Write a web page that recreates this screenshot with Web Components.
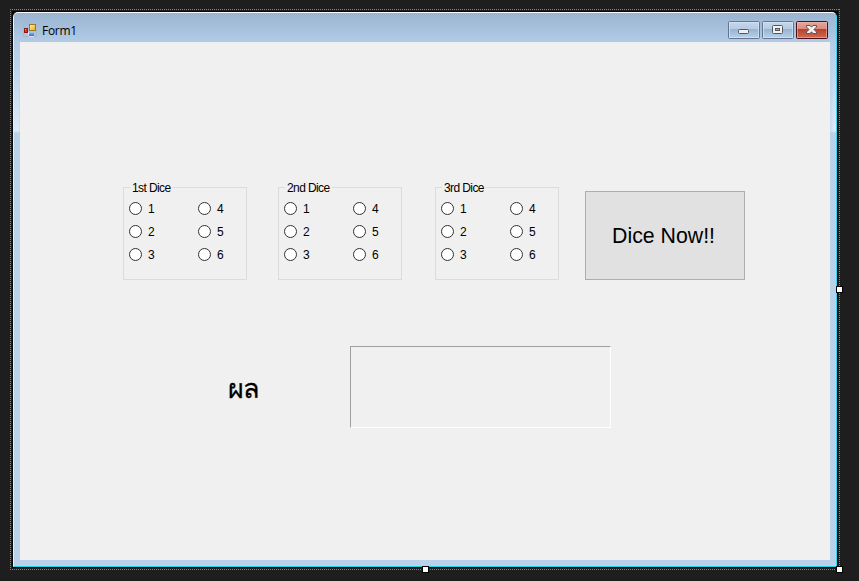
<!DOCTYPE html>
<html lang="th">
<head>
<meta charset="utf-8">
<title>Form1</title>
<style>
html,body{margin:0;height:100%;background:#1e1e1e;overflow:hidden}
body{font-family:"Liberation Sans",sans-serif;color:#000}
</style>
</head>
<body>
<design-surface>
  <form-window caption="Form1">
    <dice-row>
      <dice-group caption="1st Dice"></dice-group>
      <dice-group caption="2nd Dice" style="margin-left:31px"></dice-group>
      <dice-group caption="3rd Dice" style="margin-left:33px"></dice-group>
      <push-button>Dice Now!!</push-button>
    </dice-row>
    <result-row>ผล</result-row>
  </form-window>
</design-surface>
<script>
function define(name, html){
  customElements.define(name, class extends HTMLElement{
    constructor(){
      super();
      const root=this.attachShadow({mode:'open'});
      root.innerHTML=html;
      const cap=root.querySelector('.caption');
      if(cap) cap.textContent=this.getAttribute('caption')||'';
    }
  });
}

define('design-surface', `<style>
:host{display:block;position:relative;box-sizing:border-box;width:859px;height:581px;padding:12px 0 0 13px;background:#1e1e1e}
svg{position:absolute;left:0;top:0}
::slotted(*){position:relative}
</style>
<svg width="859" height="581" shape-rendering="crispEdges">
  <path d="M12 11H838V568H12Z" fill="#080808"/>
  <path d="M10 9.5H840M10 569.5H840M10.5 9V570M839.5 9V570" stroke="#858585" stroke-dasharray="1 1" fill="none"/>
</svg>
<slot></slot>
<svg width="859" height="581" shape-rendering="crispEdges" style="z-index:2">
  <g fill="#fff" stroke="#000"><rect x="836.5" y="286.5" width="6" height="6"/><rect x="836.5" y="566.5" width="6" height="6"/><rect x="422.5" y="566.5" width="6" height="6"/></g>
</svg>`);

define('title-bar', `<style>
:host{display:flex;height:29px;box-sizing:border-box;padding:0 3px 0 3px;align-items:flex-start}
.icon{margin:10px 5px 0 0;display:block}
.caption{flex:1;font:12px/16px "Open Sans","Noto Sans",sans-serif;margin-top:10px;letter-spacing:-.3px}
.buttons{display:flex;gap:2px;margin-top:8px}
.buttons svg{display:block}
</style>
<svg class="icon" width="14" height="14" viewBox="0 0 14 14" shape-rendering="crispEdges">
  <defs>
    <linearGradient id="y" x2="1" y2="1"><stop stop-color="#fff5a8"/><stop offset="1" stop-color="#e6a90c"/></linearGradient>
    <linearGradient id="b" x2="0" y2="1"><stop stop-color="#a5c8fa"/><stop offset="1" stop-color="#3266c8"/></linearGradient>
  </defs>
  <path d="M.5 .5H13.5V13.5H.5Z" fill="none" stroke="#a9b9cb"/>
  <rect x="6.5" y="1.5" width="6" height="6" fill="url(#y)" stroke="#9a7a26"/>
  <rect x="1.5" y="5.500" width="3" height="4" fill="#d8381c" stroke="#901a12"/><path d="M2 6h1v1H2z" fill="#ff9c82"/>
  <rect x="6" y="9" width="5" height="4" fill="url(#b)"/>
  <path d="M5 9V13M6 13.500H11" stroke="#d9e5f3"/>
</svg>
<span class="caption"></span>
<div class="buttons">
  <svg width="32" height="18" viewBox="0 0 32 18">
    <defs><linearGradient id="g" x2="0" y2="1"><stop stop-color="#c5d8ea"/><stop offset=".43" stop-color="#b5cce4"/><stop offset=".44" stop-color="#96b2cf"/><stop offset="1" stop-color="#b7d3ee"/></linearGradient></defs>
    <rect x=".5" y=".5" width="31" height="17" rx="1" fill="url(#g)" stroke="#66758d"/><rect x="1.5" y="1.5" width="29" height="15" fill="none" stroke="#d6e5f3" opacity=".7"/>
    <rect x="10.500" y="8.500" width="10" height="4" rx="1" fill="#eee" stroke="#525860"/>
  </svg>
  <svg width="32" height="18" viewBox="0 0 32 18">
    <rect x=".5" y=".5" width="31" height="17" rx="1" fill="url(#g)" stroke="#66758d"/><rect x="1.5" y="1.5" width="29" height="15" fill="none" stroke="#d6e5f3" opacity=".7"/>
    <rect x="10.500" y="4.500" width="10" height="8" rx="1" fill="#f1f1ef" stroke="#525860"/><rect x="13.500" y="7.500" width="4" height="2" fill="#96afcf" stroke="#525860"/>
  </svg>
  <svg width="32" height="18" viewBox="0 0 32 18">
    <defs><linearGradient id="r" x2="0" y2="1"><stop stop-color="#e8a89c"/><stop offset=".43" stop-color="#d98c7d"/><stop offset=".44" stop-color="#b83e28"/><stop offset="1" stop-color="#d06f53"/></linearGradient></defs>
    <rect x=".5" y=".5" width="31" height="17" rx="1" fill="url(#r)" stroke="#4c0f1c"/><rect x="1.5" y="1.5" width="29" height="15" fill="none" stroke="#edb9ae" opacity=".6"/>
    <path d="M10.500 4.500H14L15.500 6.200L17 4.500H20.500V6L18 8.500L20.500 11V12.500H17L15.500 10.800L14 12.500H10.500V11L13 8.500L10.500 6Z" fill="#f4f2f1" stroke="#5d525a"/>
  </svg>
</div>`);

define('form-window', `<style>
:host{display:flex;flex-direction:column;box-sizing:border-box;width:824px;height:555px;border:solid;border-width:1px;border-color:#fff #38d8f3 #20d3ea #eee;border-radius:5px 5px 0 0;padding:0 6px 6px;
 background:linear-gradient(90deg,transparent 5px,#b9d1ea66 5px 6px,transparent 6px 816px,#b9d1ea66 816px 818px,transparent 819px) 0 29px no-repeat,linear-gradient(#99b4d1 0,#b2cbe6 29px,#bed4ed 55px,#dce9f7 118px,#b9d1ea 120px)}
title-bar{margin:0 -1px 0 0;flex:none}
.client{flex:1;background:#f0f0f0;display:flex;flex-direction:column;width:810px}
</style>
<title-bar caption="Form1"></title-bar>
<div class="client"><slot></slot></div>`);

define('dice-row', `<style>:host{display:flex;align-items:flex-end;padding:138px 0 0 103px;height:100px}</style><slot></slot>`);

define('radio-option', `<style>
:host{display:flex;align-items:center;height:23px;font-size:12px}
svg{margin-right:6px;flex:none}
</style><svg width="13" height="13"><circle cx="6.500" cy="6.500" r="6" fill="#fff" stroke="#333"/></svg><slot></slot>`);

define('dice-group', `<style>
:host{display:block;width:124px;height:100px}
fieldset{box-sizing:border-box;height:100px;margin:0;border:1px solid #dcdcdc;padding:0 0 0 5px;min-width:0}
legend{margin-left:1px;padding:1px 2px 0;height:15px;box-sizing:border-box;font-size:12px;line-height:15px;letter-spacing:-.6px}
.options{display:grid;grid-template-columns:69px 1fr;margin-top:2px}
</style>
<fieldset><legend class="caption"></legend><div class="options">
<radio-option>1</radio-option><radio-option>4</radio-option>
<radio-option>2</radio-option><radio-option>5</radio-option>
<radio-option>3</radio-option><radio-option>6</radio-option>
</div></fieldset>`);

define('push-button', `<style>
:host{display:flex;margin-left:26px}
button{box-sizing:border-box;width:160px;height:89px;border:1px solid #adadad;background:#e1e1e1;color:#000;font:21.300px "Liberation Sans",sans-serif;padding:1px 3px 0 0;border-radius:0;letter-spacing:0}
</style><button><slot></slot></button>`);

define('result-row', `<style>
:host{display:flex;align-items:center;margin-top:66px;padding-left:208px}
.label{width:122px;font-size:27px;line-height:32px;padding-top:3px;letter-spacing:-1.500px;-webkit-text-stroke:.3px #000}
.box{box-sizing:border-box;width:261px;height:82px;border:1px solid;border-color:#a0a0a0 #fff #fff #a0a0a0}
</style><span class="label"><slot></slot></span><div class="box"></div>`);
</script>
</body>
</html>
